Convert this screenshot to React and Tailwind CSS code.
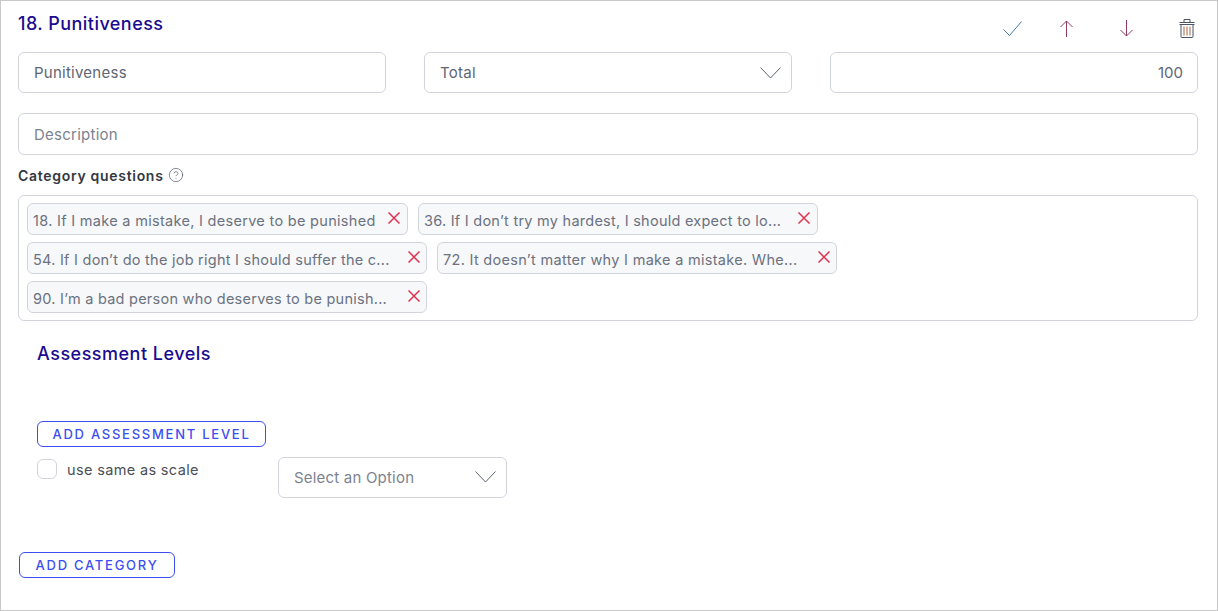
import { CircleHelp } from 'lucide-react';

const font = { fontFamily: 'Inter, "Liberation Sans", sans-serif' };

const questions = [
  { text: '18. If I make a mistake, I deserve to be punished', size: 'w-[381px] pr-[7px]', spacing: 'tracking-[0.3px]' },
  { text: '36. If I don’t try my hardest, I should expect to lo...', size: 'w-[400px] pr-[7px]', spacing: 'tracking-[0.25px]' },
  { text: '54. If I don’t do the job right I should suffer the c...', size: 'w-[400px] pr-[6px]', spacing: 'tracking-[0.25px]' },
  { text: '72. It doesn’t matter why I make a mistake. Whe...', size: 'w-[400px] pr-[6px]', spacing: 'tracking-[0.3px]' },
  { text: '90. I’m a bad person who deserves to be punish...', size: 'w-[400px] pr-[6px]', spacing: 'tracking-[0.25px]' },
];

function CheckIcon() {
  return (
    <svg width="19" height="16" viewBox="0 0 19 16" fill="none" stroke="#3f7fa8" strokeWidth="1">
      <path d="M0.5 8.5L6.5 14.5L18.5 0.5" />
    </svg>
  );
}

function ArrowUpIcon() {
  return (
    <svg width="13" height="17" viewBox="0 0 13 17" fill="none" stroke="#8c3a62" strokeWidth="1">
      <path d="M6.5 1V17M0.5 7L6.5 1L12.5 7" />
    </svg>
  );
}

function ArrowDownIcon() {
  return (
    <svg width="13" height="17" viewBox="0 0 13 17" fill="none" stroke="#8c3a62" strokeWidth="1">
      <path d="M6.5 0V16M0.5 10L6.5 16L12.5 10" />
    </svg>
  );
}

function TrashIcon() {
  return (
    <svg width="16" height="19" viewBox="0 0 16 19" fill="none" stroke="#4b5563" strokeWidth="1">
      <path d="M0.5 3.5h15M5 3.5V0.5h6v3M0.5 5.5h15" />
      <path d="M2 5.5v12a1 1 0 0 0 1 1h10a1 1 0 0 0 1-1v-12" />
      <path d="M5 7.5v9M8 7.5v9M11 7.5v9" stroke="#a8643f" />
    </svg>
  );
}

function Chevron() {
  return (
    <svg width="21" height="12" viewBox="0 0 21 12" fill="none" stroke="#5b6470" strokeWidth="1" className="shrink-0">
      <path d="M0.5 0.5L10.5 11L20.5 0.5" />
    </svg>
  );
}

function RemoveIcon() {
  return (
    <svg width="12" height="12" viewBox="0 0 12 12" fill="none" stroke="#e0314f" strokeWidth="1.5" className="shrink-0 -mt-[2px]">
      <path d="M0.5 0.5L11.5 11.5M11.5 0.5L0.5 11.5" />
    </svg>
  );
}

function Chip({ text, size, spacing }) {
  return (
    <div className={`${size} h-8 flex items-center justify-between pl-[5px] rounded-md border border-[#d1d5db] bg-[#f7f8fa]`}>
      <span className={`${spacing} mt-[3px] text-[14.5px] text-[#6b7280] whitespace-nowrap`}>{text}</span>
      <RemoveIcon />
    </div>
  );
}

export default function App() {
  return (
    <div style={font} className="w-[1218px] h-[611px] border border-[#c8c8c8] bg-white pl-[17px] pr-[19px] overflow-hidden">
      {/* Title row */}
      <div className="flex justify-between h-[51px]">
        <h2 className="text-[18px] font-medium text-[#1a0b8f] tracking-[0.45px] mt-[11px] leading-6">18. Punitiveness</h2>
        <div className="flex items-start mt-[18px] mr-[3px]">
          <div className="mt-[2px]"><CheckIcon /></div>
          <div className="ml-[38px] mt-[1px]"><ArrowUpIcon /></div>
          <div className="ml-[47px] mt-[1px]"><ArrowDownIcon /></div>
          <div className="ml-[46px]"><TrashIcon /></div>
        </div>
      </div>

      {/* Name, type, score */}
      <div className="grid grid-cols-3 gap-[38px]">
        <div className="h-[41px] flex items-center px-[15px] rounded-md border border-[#d1d5db] text-[15px] tracking-[0.25px] text-[#5f6673]">
          <span className="mt-[2px]">Punitiveness</span>
        </div>
        <div className="h-[41px] flex items-center justify-between pl-[15px] pr-[10px] rounded-md border border-[#d1d5db] text-[15px] tracking-[0.25px] text-[#5f6673]">
          <span className="mt-[1px]">Total</span>
          <Chevron />
        </div>
        <div className="h-[41px] flex items-center justify-end pl-[15px] pr-[14px] rounded-md border border-[#d1d5db] text-[15px] text-[#5f6673]">
          <span className="mt-[2px]">100</span>
        </div>
      </div>

      <div className="h-[42px] mt-[20px] flex items-center px-[15px] rounded-md border border-[#d1d5db] text-[15px] tracking-[0.25px] text-[#7c8390]">
        <span className="mt-[2px]">Description</span>
      </div>

      <div className="flex items-center gap-[4px] mt-[11px] h-[18px] text-[14px] font-semibold tracking-[0.7px] text-[#333842]">
        Category questions
        <CircleHelp size={16} strokeWidth={1} className="text-[#4b5563]" />
      </div>

      {/* Selected questions */}
      <div className="mt-[11px] h-[126px] px-[8px] pt-[7px] flex flex-wrap content-start gap-x-[10px] gap-y-[7px] rounded-md border border-[#d1d5db]">
        {questions.map((q) => (
          <Chip key={q.text} text={q.text} size={q.size} spacing={q.spacing} />
        ))}
      </div>

      <div className="pl-[19px]">
        <h3 className="mt-[21px] text-[18px] font-medium leading-6 tracking-[0.5px] text-[#1a0b8f]">Assessment Levels</h3>
        <button className="mt-[55px] block w-[229px] h-[26px] pt-[1px] rounded-md border border-[#3b4ff0] text-[13px] font-medium tracking-[1.75px] text-[#3b4ff0]">
          ADD ASSESSMENT LEVEL
        </button>
        <div className="flex items-start mt-[10px]">
          <div className="flex items-center w-[241px]">
            <span className="w-5 h-5 rounded-md border border-[#d1d5db]" />
            <span className="ml-[10px] mt-[2px] text-[14.5px] tracking-[0.35px] text-[#4b4f58]">use same as scale</span>
          </div>
          <div className="w-[229px] h-[41px] flex items-center justify-between pl-[15px] pr-[10px] rounded-md border border-[#d1d5db] text-[15px] tracking-[0.2px] text-[#7c8390]">
            <span className="mt-[2px]">Select an Option</span>
            <div className="-mt-[2px]"><Chevron /></div>
          </div>
        </div>
      </div>

      <button className="mt-[54px] ml-[1px] block w-[156px] h-[26px] pt-[1px] rounded-md border border-[#3b4ff0] text-[13px] font-medium tracking-[1.75px] text-[#3b4ff0]">
        ADD CATEGORY
      </button>
    </div>
  );
}
